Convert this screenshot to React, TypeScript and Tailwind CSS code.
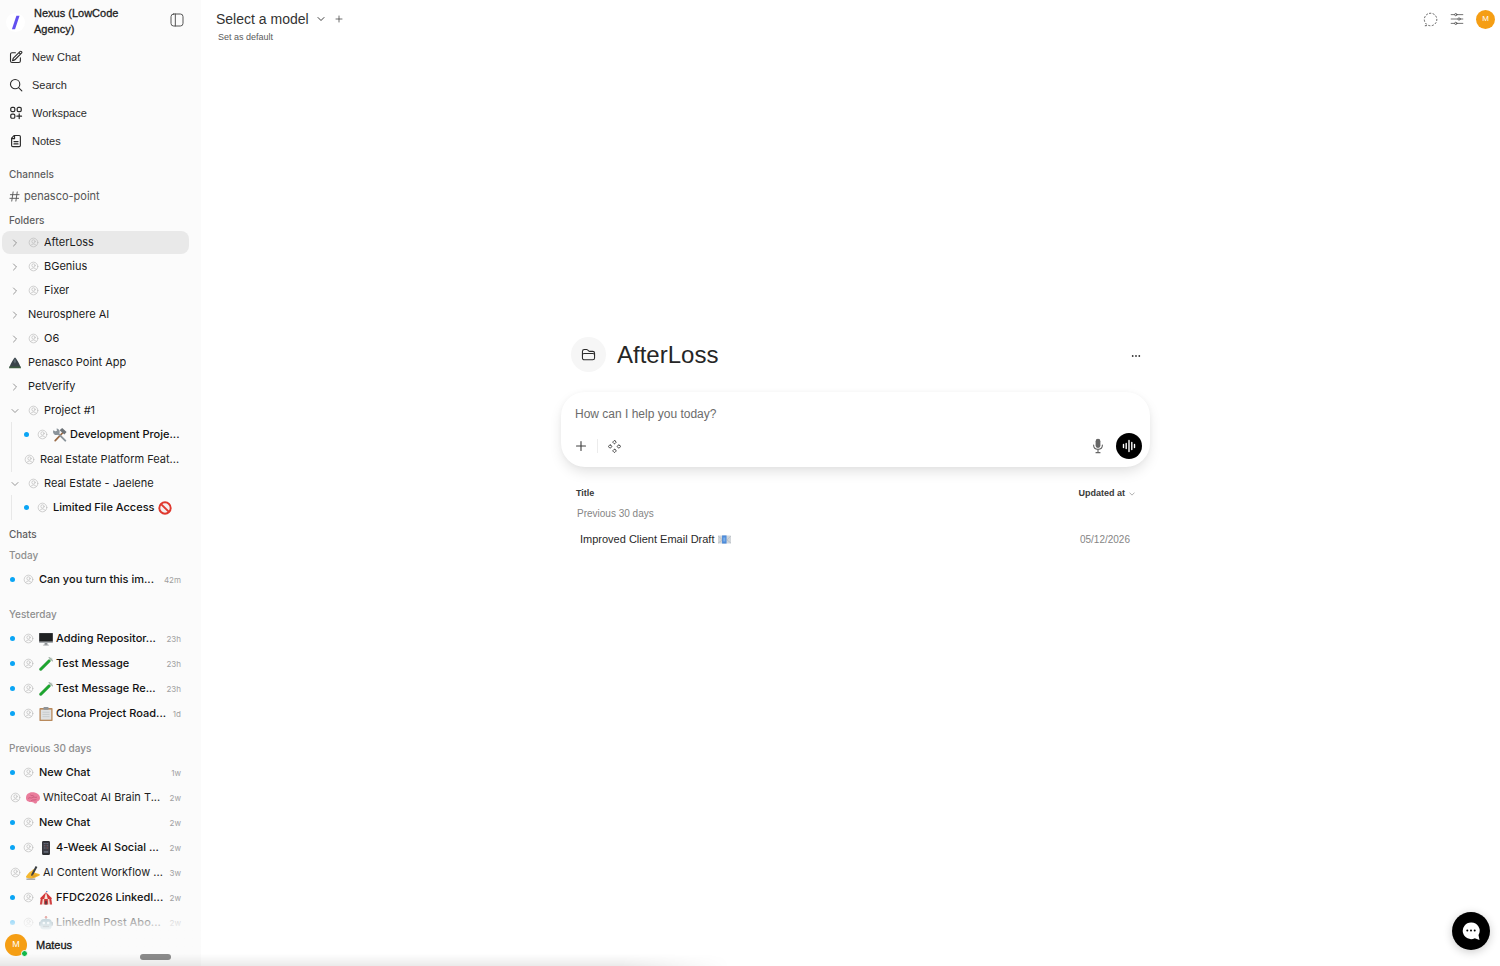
import type { ReactNode } from "react";

const SANS = "font-['Liberation_Sans',Arial,sans-serif]";
const INTER = "font-['Inter',sans-serif]";

type IconProps = { className?: string; width?: number; children: ReactNode };

function Stroke({ className = "", width = 1.5, children }: IconProps) {
  return (
    <svg
      viewBox="0 0 24 24"
      fill="none"
      stroke="currentColor"
      strokeWidth={width}
      strokeLinecap="round"
      strokeLinejoin="round"
      aria-hidden="true"
      className={`shrink-0 ${className}`}
    >
      {children}
    </svg>
  );
}

const Chevron = ({ open = false, className = "" }: { open?: boolean; className?: string }) => (
  <Stroke className={className} width={2.8}>
    <path d={open ? "m21 7.500-9 9-9-9" : "m7.500 3 9 9-9 9"} />
  </Stroke>
);

const Plus = ({ className = "" }: { className?: string }) => (
  <Stroke className={className} width={2.2}>
    <path d="M12 3v18M3 12h18" />
  </Stroke>
);

const UserCircle = () => (
  <Stroke className="size-[11px] text-[#bcbcbc]" width={1.5}>
    <circle cx="12" cy="12" r="9.5" />
    <circle cx="12" cy="9.7" r="3.6" />
    <path d="M5.8 18.8a7 7 0 0 1 12.4 0" />
  </Stroke>
);

const PencilSquare = () => (
  <Stroke className="size-[14px]" width={1.9}>
    <path d="m17 4.500 1.700-1.700a1.900 1.900 0 0 1 2.700 2.700L10.600 16.300a4.500 4.500 0 0 1-1.900 1.100L6 18.200l.8-2.700a4.500 4.500 0 0 1 1.100-1.900L17 4.500Zm0 0 2.700 2.700" />
    <path d="M19.500 13.500v5.300a2.600 2.600 0 0 1-2.600 2.600H5.200a2.600 2.600 0 0 1-2.600-2.600V7.200a2.600 2.600 0 0 1 2.600-2.600H11" />
  </Stroke>
);

const SearchIcon = () => (
  <Stroke className="size-[14px]" width={1.9}>
    <circle cx="10.5" cy="10.5" r="8" />
    <path d="m22 22-5.6-5.6" />
  </Stroke>
);

const WorkspaceIcon = () => (
  <Stroke className="size-[14px]" width={2.1}>
    <rect x="3" y="2.500" width="7" height="7" rx="2.200" />
    <rect x="14" y="2.500" width="7" height="7" rx="2.200" />
    <rect x="3" y="14" width="7" height="7" rx="2.200" />
    <path d="M17.500 13.500v8M13.500 17.500h8" />
  </Stroke>
);

const NoteIcon = () => (
  <Stroke className="size-[14px]" width={2}>
    <path d="M9 2.500h8.500A2 2 0 0 1 19.500 4.500v15a2 2 0 0 1-2 2h-11a2 2 0 0 1-2-2V7L9 2.500Z" />
    <path d="M9.500 3v5H5M8.500 13h7M8.500 17h7" />
  </Stroke>
);

const art: Record<string, ReactNode> = {
  mountain: (
    <>
      <path d="M8 0.500C10 2 14 9 15.500 13.500H.5C2 9 6 2 8 .5Z" fill="#39434a" />
      <path d="M8 1.500 9.500 6 8 9 6 6Z" fill="#5c6870" />
      <path d="M.5 12.500h15l.5 2.500H0Z" fill="#3c5a40" />
    </>
  ),
  tools: (
    <>
      <path d="M2.500 14.500 12.500 4" stroke="#9a6a45" strokeWidth="2" strokeLinecap="round" />
      <path d="m7.500 2.500 3-2.500 5 4.500L13 7.500Z" fill="#6d7378" />
      <path d="M4 4.500 14 14.500" stroke="#8b949b" strokeWidth="2.200" strokeLinecap="round" />
      <path d="M.5 2.500 3 4l1.500-1L4 .5a3.800 3.800 0 1 1-3.500 2Z" fill="#8b949b" />
    </>
  ),
  banned: (
    <>
      <circle cx="8" cy="8" r="6.500" fill="#f6f0f0" stroke="#e0392f" strokeWidth="2.200" />
      <path d="m3.500 3.500 9 9" stroke="#e0392f" strokeWidth="2.200" />
    </>
  ),
  desktop: (
    <>
      <rect x="0" y="1" width="16" height="11.500" rx=".8" fill="#a9adb0" />
      <rect x=".3" y="1.300" width="15.400" height="9.500" fill="#1f2122" />
      <path d="M6.500 12.500h3l.5 2.500H6Z" fill="#8c9093" />
      <path d="M4.500 14.500h7v1h-7z" fill="#b5b8ba" />
    </>
  ),
  tube: (
    <>
      <path d="M2 14 13.500 2.500" stroke="#c9d3cc" strokeWidth="3.800" strokeLinecap="round" />
      <path d="M2 14 11.500 4.500" stroke="#1da62f" strokeWidth="3.200" strokeLinecap="round" />
      <path d="m11.500.5 4 4" stroke="#9fb0a5" strokeWidth="1.200" strokeLinecap="round" />
    </>
  ),
  clipboard: (
    <>
      <rect x=".5" y="1" width="15" height="15" rx="1" fill="#b98a5c" />
      <rect x="2" y="3" width="12" height="11.500" fill="#dfe1e3" />
      <path d="M4 6h8M4 8.500h8M4 11h8" stroke="#bfc3c6" strokeWidth=".8" />
      <rect x="5" y="0" width="6" height="3" rx="1" fill="#8f9498" />
    </>
  ),
  brain: (
    <>
      <path d="M0 8C0 4 3 1.500 7 1.500c5.500 0 9 3 9 6.500 0 2.200-1.500 3.500-3 3.700-.5 2.300-1.700 3-3 2.500-1-.6-2-1.500-3.500-1.500C3 12.700 0 11.500 0 8Z" fill="#ea7d9c" />
      <path d="M2.500 8.500c2-2 3 .5 5-1s3 .5 5-.5M5 4.500c1 1.500 3 0 4 1.500M6 11c2-1.500 4 0 6-1.500" stroke="#bd4f73" strokeWidth=".8" fill="none" />
    </>
  ),
  phone: (
    <>
      <rect x="3.500" y="0" width="9" height="16" rx="1.500" fill="#2a2c30" />
      <rect x="4.500" y="1.500" width="7" height="12.500" fill="#3d3c44" />
      <path d="M5.500 3h1M7.500 3h1M9.500 3h1M5.500 5.500h1M9.500 5.500h1M5.500 8h1M7.500 8h1M5.500 12.500h5" stroke="#8796a6" strokeWidth="1" />
      <path d="M7.500 5.500h1M9.500 8h1" stroke="#c46a58" />
    </>
  ),
  writing: (
    <>
      <path d="M0 12C2.500 8.500 4 6.500 6 6l2-2c1.500-.8 2.500.3 2 1.500l-.8 1.800L15 9c1.300.5 1.200 1.800 0 2l-5 2.500c-3 1.200-7 .8-10-.5Z" fill="#f5b82e" />
      <path d="m6 9.500 5-9.500 2 1-5 9.500-2 1Z" fill="#3c3f42" />
      <path d="M7.500 10.500H13M7 12.300h4" stroke="#ce8b1e" strokeWidth=".7" />
      <path d="M.5 15h10" stroke="#444" strokeWidth=".8" />
    </>
  ),
  circus: (
    <>
      <path d="M8 1.500 14.500 8v1h-13V8Z" fill="#d4373a" />
      <path d="M8 1.500 10 9H6Z" fill="#f3e8df" />
      <path d="M2 9h12l1 6.500H1Z" fill="#ecd8cd" />
      <path d="M2 9h2.200L3.500 15.500H1ZM11.800 9H14l1 6.500h-2.500ZM6 9h4l.5 6.500h-5Z" fill="#cf3436" />
      <path d="M8 10.500c1.200 1 1.200 3 1.200 5H6.800c0-2 0-4 1.200-5Z" fill="#53272b" />
      <path d="M8 2V0l2.500.8L8 1.500" fill="#3c7bd0" />
    </>
  ),
  robot: (
    <>
      <circle cx="8" cy="1.500" r="1.400" fill="#d6584f" />
      <path d="M8 2v3" stroke="#77848c" />
      <rect x="0" y="6.500" width="16" height="5" rx="1.500" fill="#5f7b8a" />
      <rect x="1.500" y="3.500" width="13" height="12" rx="4" fill="#7fa6b5" />
      <circle cx="5.500" cy="8" r="1.500" fill="#eaf5fa" />
      <circle cx="10.500" cy="8" r="1.500" fill="#eaf5fa" />
      <path d="M4.500 12h7" stroke="#3d5664" strokeWidth="1.500" />
    </>
  ),
  mail: (
    <>
      <rect x="0" y="3" width="16" height="10" rx=".8" fill="#d3d7db" />
      <path d="m0 3.500 5.500 5L0 12.500M16 3.500l-5 5 5 4" stroke="#b0b6bc" strokeWidth=".8" fill="none" />
      <rect x="5" y="3" width="5.500" height="10" fill="#4d8bd9" />
      <path d="M6.500 5.500h2.500v5H6.500z" fill="#79aeea" />
    </>
  ),
};

const Emoji = ({ name, className = "size-[14px]" }: { name: string; className?: string }) => (
  <svg viewBox="0 0 16 16" fill="none" aria-hidden="true" className={`shrink-0 ${className}`}>
    {art[name]}
  </svg>
);

const Dot = () => <span className="size-[5px] shrink-0 rounded-full bg-[#0aa5f5]" />;

const nav = [
  { label: "New Chat", icon: <PencilSquare /> },
  { label: "Search", icon: <SearchIcon /> },
  { label: "Workspace", icon: <WorkspaceIcon /> },
  { label: "Notes", icon: <NoteIcon /> },
];

type FolderProps = { name: string; user?: boolean; open?: boolean; active?: boolean; emoji?: string };

function Folder({ name, user = false, open = false, active = false, emoji }: FolderProps) {
  return (
    <button
      type="button"
      className={`mr-3 ml-[2px] flex h-[23px] items-center rounded-lg pl-[7px] text-left text-[#1c1c1c] ${active ? "bg-[#e9e9e9]" : ""}`}
    >
      <span className="flex w-[19px] shrink-0 items-center">
        {emoji ? (
          <Emoji name={emoji} className="size-[12px]" />
        ) : (
          <Chevron open={open} className="ml-[2px] size-[8px] text-[#8e8e8e]" />
        )}
      </span>
      {user && (
        <span className="mr-[5px] flex">
          <UserCircle />
        </span>
      )}
      <span className="truncate">{name}</span>
    </button>
  );
}

type ChatProps = {
  title: string;
  time?: string;
  unread?: boolean;
  emoji?: string;
  after?: string;
};

function Chat({ title, time, unread = false, emoji, after }: ChatProps) {
  return (
    <a
      href="#chat"
      className={`flex h-[25px] items-center gap-[5px] pr-5 ${unread ? "font-medium text-[#111111]" : "text-[#1f1f1f]"}`}
    >
      {unread && (
        <span className="mr-[3px] flex">
          <Dot />
        </span>
      )}
      <UserCircle />
      <span className="flex min-w-0 flex-1 items-center gap-[3px] whitespace-nowrap">
        {emoji && <Emoji name={emoji} />}
        <span>{title}</span>
        {after && <Emoji name={after} />}
      </span>
      {time && <span className="text-[8px] font-normal text-[#a0a0a0]">{time}</span>}
    </a>
  );
}

const yesterday: ChatProps[] = [
  { title: "Adding Repositor...", time: "23h", unread: true, emoji: "desktop" },
  { title: "Test Message", time: "23h", unread: true, emoji: "tube" },
  { title: "Test Message Re...", time: "23h", unread: true, emoji: "tube" },
  { title: "Clona Project Road...", time: "1d", unread: true, emoji: "clipboard" },
];

const month: ChatProps[] = [
  { title: "New Chat", time: "1w", unread: true },
  { title: "WhiteCoat AI Brain T...", time: "2w", emoji: "brain" },
  { title: "New Chat", time: "2w", unread: true },
  { title: "4-Week AI Social ...", time: "2w", unread: true, emoji: "phone" },
  { title: "AI Content Workflow ...", time: "3w", emoji: "writing" },
  { title: "FFDC2026 LinkedI...", time: "2w", unread: true, emoji: "circus" },
  { title: "LinkedIn Post Abo...", time: "2w", unread: true, emoji: "robot" },
];

function Period({ label, chats }: { label: string; chats: ChatProps[] }) {
  return (
    <section className="mb-3">
      <h3 className="mb-[2px] h-5 pl-[9px] text-[10px] leading-5 font-medium text-[#8f8f8f]">{label}</h3>
      <div className="pl-[10px]">
        {chats.map((c, i) => (
          <Chat key={i} {...c} />
        ))}
      </div>
    </section>
  );
}

const heading = "h-5 pl-[9px] text-[10px] leading-5 font-medium text-[#5e5e5e]";

function Sidebar() {
  return (
    <aside className={`relative flex h-screen w-[201px] shrink-0 flex-col overflow-hidden bg-[#fbfbfb] text-[11px] ${INTER}`}>
      <header className={`mb-[6px] flex pt-[5px] pr-4 pl-[6px] ${SANS}`}>
        <span className="mt-[8px] flex size-[19px] shrink-0 items-center justify-center rounded-full bg-white">
          <svg viewBox="0 0 10 16" aria-hidden="true" className="h-[15px] w-[9px]">
            <path d="M6 .5h3.500L4.500 15.500H1Z" fill="#6250f0" />
          </svg>
        </span>
        <h1 className="ml-[9px] w-[100px] leading-4 text-[#1d1d1d] [-webkit-text-stroke:0.3px]">Nexus (LowCode Agency)</h1>
        <button type="button" aria-label="Toggle sidebar" className="ml-auto flex h-[30px] items-center text-[#555555]">
          <Stroke className="size-[16px]" width={1.5}>
            <rect x="3" y="3" width="18" height="18" rx="4" />
            <path d="M9.500 3v18" />
          </Stroke>
        </button>
      </header>
      <nav className={`text-[#2c2c2c] ${SANS}`}>
        {nav.map((n) => (
          <a key={n.label} href="#nav" className="flex h-7 items-center gap-[9px] pl-[9px]">
            {n.icon}
            {n.label}
          </a>
        ))}
      </nav>
      <h2 className={`mt-[9px] ${heading}`}>Channels</h2>
      <a href="#channel" className="mt-[2px] flex h-5 items-center gap-[4px] pl-[9px] text-[#555555]">
        <Stroke className="size-[11px]" width={2}>
          <path d="M9 2 6 22M18 2l-3 20M3 8h19M2 16h19" />
        </Stroke>
        penasco-point
      </a>
      <h2 className={`mt-1 mb-px ${heading}`}>Folders</h2>
      <div className="flex flex-col gap-px">
        <Folder name="AfterLoss" user active />
        <Folder name="BGenius" user />
        <Folder name="Fixer" user />
        <Folder name="Neurosphere AI" />
        <Folder name="O6" user />
        <Folder name="Penasco Point App" emoji="mountain" />
        <Folder name="PetVerify" />
        <Folder name="Project #1" user open />
      </div>
      <div className="ml-[11px] border-l border-[#e8e8e8] pl-[12px]">
        <Chat title="Development Proje..." unread emoji="tools" />
        <Chat title="Real Estate Platform Feat..." />
      </div>
      <Folder name="Real Estate - Jaelene" user open />
      <div className="ml-[11px] border-l border-[#e8e8e8] pl-[12px]">
        <Chat title="Limited File Access" unread after="banned" />
      </div>
      <h2 className={`mt-1 mb-px ${heading}`}>Chats</h2>
      <Period label="Today" chats={[{ title: "Can you turn this im...", time: "42m", unread: true }]} />
      <Period label="Yesterday" chats={yesterday} />
      <Period label="Previous 30 days" chats={month} />

      <footer className="absolute inset-x-0 bottom-0 bg-linear-to-t from-[#fbfbfb] from-50% to-transparent pt-6">
        <button type="button" className={`flex h-[42px] items-start gap-[9px] pl-[5px] text-[#161616] ${SANS}`}>
          <span className="relative mt-[10px] flex size-[22px] items-center justify-center rounded-full bg-[#f59e14] text-[9px] text-white">
            M
            <span className="absolute right-[-1px] bottom-[-1px] size-[7px] rounded-full border border-white bg-[#12b84a]" />
          </span>
          <span className="mt-[10px] leading-[22px] [-webkit-text-stroke:0.3px]">Mateus</span>
        </button>
        <span className="absolute bottom-[6px] left-[140px] h-[6px] w-[31px] rounded-full bg-[#8c8c8c]" />
      </footer>
    </aside>
  );
}

function TopBar() {
  return (
    <header className="flex items-start justify-between pr-[5px] pl-[15px]">
      <div>
        <div className="flex h-[38px] items-center text-[#3a3a3a]">
          <button type="button" className="flex items-center gap-[8px] text-[14px] text-[#333333]">
            Select a model
            <Chevron open className="size-[8px]" />
          </button>
          <button type="button" aria-label="Add model" className="ml-[10px]">
            <Plus className="size-[8px]" />
          </button>
        </div>
        <button type="button" className="mt-[-7px] ml-[2px] block h-3 text-[9px] leading-3 text-[#5a5a5a]">
          Set as default
        </button>
      </div>
      <div className="flex h-[38px] items-center gap-[12px] text-[#555555]">
        <button type="button" aria-label="Temporary chat">
          <Stroke className="size-[15px]" width={1.5}>
            <path d="M5.500 19.500A10 10 0 1 1 9 21.500L3 22Z" strokeDasharray="2 3.600" />
          </Stroke>
        </button>
        <button type="button" aria-label="Controls">
          <Stroke className="size-[14px]" width={1.4}>
            <path d="M2 4.500h6M12 4.500h10M2 12h11.500M17.500 12H22M2 19.500h6M12 19.500h10" />
            <circle cx="10" cy="4.500" r="2" />
            <circle cx="15.500" cy="12" r="2" />
            <circle cx="10" cy="19.500" r="2" />
          </Stroke>
        </button>
        <button
          type="button"
          aria-label="Account"
          className="flex size-[19px] items-center justify-center rounded-full bg-[#f59e14] text-[8px] text-white"
        >
          M
        </button>
      </div>
    </header>
  );
}

function Composer() {
  return (
    <form className="rounded-3xl bg-white px-[14px] pt-[14px] pb-[8px] shadow-[0_6px_14px_-2px_rgba(0,0,0,0.13),0_0_5px_rgba(0,0,0,0.03)]">
      <input
        type="text"
        aria-label="Message"
        placeholder="How can I help you today?"
        className="block h-4 w-full text-[12px] outline-none placeholder:text-[#6b6b6b]"
      />
      <div className="mt-[11px] flex h-[26px] items-center text-[#3f3f3f]">
        <button type="button" aria-label="Add attachment">
          <Plus className="size-[12px]" />
        </button>
        <span className="mx-[10px] h-[14px] w-px bg-[#ececec]" />
        <button type="button" aria-label="Integrations">
          <Stroke className="size-[13px]" width={1.7}>
            <rect x="9.500" y="1.500" width="5" height="5" rx="1.500" transform="rotate(45 12 4)" />
            <rect x="9.500" y="17.500" width="5" height="5" rx="1.500" transform="rotate(45 12 20)" />
            <rect x="1.500" y="9.500" width="5" height="5" rx="1.500" transform="rotate(45 4 12)" />
            <rect x="17.500" y="9.500" width="5" height="5" rx="1.500" transform="rotate(45 20 12)" />
          </Stroke>
        </button>
        <button type="button" aria-label="Dictate" className="mr-[10px] ml-auto text-[#666666]">
          <svg viewBox="0 0 20 20" fill="currentColor" aria-hidden="true" className="size-[16px]">
            <path d="M7 4a3 3 0 0 1 6 0v5.500a3 3 0 0 1-6 0V4Z" />
            <path d="M4.500 8.800c0 7.200 11 7.200 11 0M10 14.200V18M7.500 18.300h5" fill="none" stroke="currentColor" strokeWidth="1.400" strokeLinecap="round" />
          </svg>
        </button>
        <button
          type="button"
          aria-label="Voice mode"
          className="mr-[-6px] flex size-[26px] items-center justify-center rounded-full bg-black text-white"
        >
          <svg viewBox="0 0 14 14" stroke="currentColor" strokeWidth="1.400" strokeLinecap="round" aria-hidden="true" className="size-[14px]">
            <path d="M1.500 5.500v3M4.200 4.500v5M7 1.500v11M9.800 3.500v7M12.500 5.500v3" />
          </svg>
        </button>
      </div>
    </form>
  );
}

function ChatTable() {
  return (
    <table className="w-full border-collapse text-left">
      <thead className="text-[9px] text-[#3a3a3a]">
        <tr className="h-[18px]">
          <th scope="col" className="pl-[15px] font-bold">
            Title
          </th>
          <th scope="col" className="pr-[15px] font-bold">
            <button type="button" className="ml-auto flex items-center gap-[4px]">
              Updated at
              <Chevron open className="size-[6px] text-[#8e8e8e]" />
            </button>
          </th>
        </tr>
      </thead>
      <tbody>
        <tr className="h-5">
          <th scope="rowgroup" colSpan={2} className="pl-[16px] text-[10px] font-normal text-[#858585]">
            Previous 30 days
          </th>
        </tr>
        <tr className="h-[33px]">
          <td className="pl-[19px] text-[11px] text-[#2a2a2a]">
            <a href="#chat" className="flex items-center gap-[3px]">
              Improved Client Email Draft
              <Emoji name="mail" className="size-[13px]" />
            </a>
          </td>
          <td className="pr-[20px] text-right text-[10px] text-[#858585]">05/12/2026</td>
        </tr>
      </tbody>
    </table>
  );
}

export default function App() {
  return (
    <div className={`relative flex h-screen overflow-hidden bg-white ${SANS}`}>
      <Sidebar />
      <div className="flex min-w-0 flex-1 flex-col">
        <TopBar />
        <main className="flex flex-1 flex-col items-center justify-center pl-[10px]">
          <div className="w-full max-w-[589px]">
            <div className="mb-[20px] flex items-center pr-[8px] pl-[10px]">
              <span className="flex size-[35px] items-center justify-center rounded-full bg-[#f6f6f6] text-[#2a2a2a]">
                <Stroke className="size-[15px]" width={1.7}>
                  <path d="M2.300 13V7a3 3 0 0 1 3-3h3.600c.6 0 1.200.3 1.600.7l1.700 1.600c.4.4 1 .7 1.600.7h4.900a3 3 0 0 1 3 3v7.500a3 3 0 0 1-3 3H5.300a3 3 0 0 1-3-3Z" />
                  <path d="M2.300 13a2.600 2.600 0 0 1 2.600-2.600h14.200a2.600 2.600 0 0 1 2.600 2.600" />
                </Stroke>
              </span>
              <h2 className="ml-[11px] text-[24px] leading-8 text-[#262626]">AfterLoss</h2>
              <button type="button" aria-label="Folder options" className="ml-auto text-[#333333]">
                <svg viewBox="0 0 12 12" fill="currentColor" aria-hidden="true" className="size-[12px]">
                  <circle cx="2.700" cy="7" r=".9" />
                  <circle cx="6" cy="7" r=".9" />
                  <circle cx="9.300" cy="7" r=".9" />
                </svg>
              </button>
            </div>
            <Composer />
            <div className="mt-[18px] min-h-[187px]">
              <ChatTable />
            </div>
          </div>
        </main>
      </div>
      <div className="pointer-events-none absolute bottom-0 left-0 h-[12px] w-[730px] bg-linear-to-t from-black/8 to-transparent mask-r-from-85%" />
      <button
        type="button"
        aria-label="Open support chat"
        className="absolute right-[10px] bottom-[16px] flex size-[38px] items-center justify-center rounded-full bg-black shadow-[0_2px_10px_rgba(0,0,0,0.2)]"
      >
        <svg viewBox="0 0 20 20" aria-hidden="true" className="size-[20px]">
          <path d="M10 1.500a8.300 8.300 0 1 0 3.800 15.700L18.500 19l-1-5A8.300 8.300 0 0 0 10 1.500Z" fill="#ffffff" />
          <circle cx="6.300" cy="9.500" r="1" fill="#000000" />
          <circle cx="10" cy="9.500" r="1" fill="#000000" />
          <circle cx="13.700" cy="9.500" r="1" fill="#000000" />
        </svg>
      </button>
    </div>
  );
}
